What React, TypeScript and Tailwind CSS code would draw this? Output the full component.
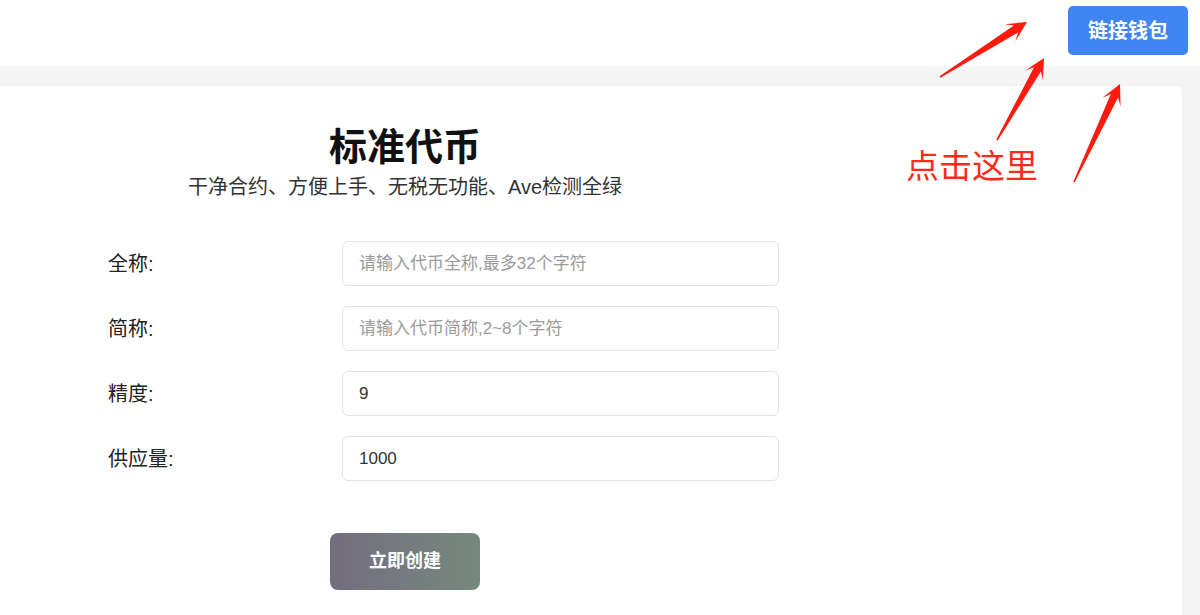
import React from "react";

type Pt = [number, number];

// tapered red annotation arrow, tail -> tip
const arrowPoints = (tail: Pt, tip: Pt) => {
  const dx = tip[0] - tail[0];
  const dy = tip[1] - tail[1];
  const len = Math.hypot(dx, dy);
  const ux = dx / len;
  const uy = dy / len;
  const nx = -uy;
  const ny = ux;
  const head = 20;
  const neck = 13;
  const at = (back: number, side: number): Pt => [
    tip[0] - ux * back + nx * side,
    tip[1] - uy * back + ny * side,
  ];
  const pts: Pt[] = [
    [tail[0] + nx * 0.8, tail[1] + ny * 0.8],
    at(neck, 4),
    at(head, 10),
    tip,
    at(head, -10),
    at(neck, -4),
    [tail[0] - nx * 0.8, tail[1] - ny * 0.8],
  ];
  return pts.map((p) => p.join(",")).join(" ");
};

const fields = [
  { label: "全称:", placeholder: "请输入代币全称,最多32个字符", value: "" },
  { label: "简称:", placeholder: "请输入代币简称,2~8个字符", value: "" },
  { label: "精度:", placeholder: "", value: "9" },
  { label: "供应量:", placeholder: "", value: "1000" },
];

const App: React.FC = () => {
  return (
    <div
      className="relative w-[1200px] h-[615px] overflow-hidden bg-[#f5f5f5]"
      style={{ fontFamily: '"Liberation Sans", "Noto Sans CJK SC", sans-serif' }}
    >
      <header className="h-[66px] bg-white flex justify-end items-start pt-[6px] pr-[12px]">
        <button className="w-[120px] h-[49px] rounded-[5px] bg-[#3f86f3] text-white text-[20px] font-bold">
          链接钱包
        </button>
      </header>

      <main className="pt-[20px] pr-[18px]">
        <div className="bg-white rounded-tr-md shadow-[0_0_4px_rgba(0,0,0,0.04)] h-[560px] pt-[38px]">
          <div className="w-[810px] text-center">
            <h1 className="text-[38px] font-bold leading-[46px] text-[#111]">标准代币</h1>
            <p className="text-[20px] leading-[26px] text-[#333] mt-[4px]">
              干净合约、方便上手、无税无功能、Ave检测全绿
            </p>
          </div>

          <div className="mt-[41px] pl-[108px] flex flex-col gap-[20px]">
            {fields.map((f) => (
              <div key={f.label} className="flex items-center">
                <label className="w-[234px] text-[20px] text-[#222]">{f.label}</label>
                <input
                  className="w-[437px] h-[45px] rounded-md border border-[#e3e3e3] px-[16px] text-[17px] text-[#333] placeholder:text-[#9a9a9a] outline-none"
                  placeholder={f.placeholder}
                  defaultValue={f.value}
                />
              </div>
            ))}
          </div>

          <div className="mt-[52px] pl-[330px]">
            <button className="w-[150px] h-[57px] rounded-lg bg-gradient-to-r from-[#736d7e] to-[#76897e] text-white text-[18px] font-bold">
              立即创建
            </button>
          </div>
        </div>
      </main>

      {/* annotation overlay */}
      <svg className="absolute inset-0 pointer-events-none" width="1200" height="615">
        <polygon points={arrowPoints([940, 77], [1027, 22])} fill="#ff1a0e" />
        <polygon points={arrowPoints([997, 140], [1044, 58])} fill="#ff1a0e" />
        <polygon points={arrowPoints([1074, 182], [1120, 84])} fill="#ff1a0e" />
      </svg>
      <div className="absolute left-[906px] top-[144px] text-[33px] leading-[46px] text-[#ff2a1a] pointer-events-none">
        点击这里
      </div>
    </div>
  );
};

export default App;
